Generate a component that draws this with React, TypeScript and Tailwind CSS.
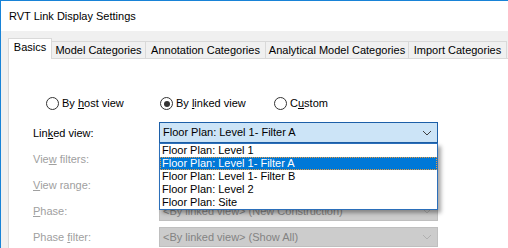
import React from 'react';

const Chevron: React.FC<{ disabled?: boolean }> = ({ disabled }) => (
  <svg width="10" height="6" viewBox="0 0 10 6" className="shrink-0">
    <path d="M1 1 L5 5 L9 1" fill="none" stroke={disabled ? '#b0b0b0' : '#404040'} strokeWidth="1" />
  </svg>
);

const Radio: React.FC<{ checked?: boolean; children: React.ReactNode }> = ({ checked, children }) => (
  <div className="w-[114px] flex items-center">
    <span className="w-[13px] h-[13px] rounded-full border border-[#333333] bg-white flex items-center justify-center shrink-0">
      {checked && <span className="w-[6px] h-[6px] rounded-full bg-[#333333]" />}
    </span>
    <span className="ml-[3px] leading-[13px]">{children}</span>
  </div>
);

const tabs = [
  { label: 'Model Categories', w: 'w-[94px]' },
  { label: 'Annotation Categories', w: 'w-[120px]' },
  { label: 'Analytical Model Categories', w: 'w-[143px]' },
  { label: 'Import Categories', w: 'w-[98px]' },
];

const items = [
  'Floor Plan: Level 1',
  'Floor Plan: Level 1- Filter A',
  'Floor Plan: Level 1- Filter B',
  'Floor Plan: Level 2',
  'Floor Plan: Site',
];

export default function App() {
  return (
    <div className="w-[508px] h-[248px] overflow-hidden bg-[#f0f0f0] border-t border-l border-[#1883d7] font-['Liberation_Sans',Arial,sans-serif] text-[11px] text-black flex flex-col">
      {/* title bar */}
      <div className="h-[30px] shrink-0 bg-white flex items-center pl-[8px]">RVT Link Display Settings</div>

      <div className="pl-[7px] flex-1 flex flex-col">
        {/* tabs */}
        <div className="h-[28px] shrink-0 flex items-end -mb-px relative z-10">
          <div className="w-[44px] h-[21px] bg-white border border-b-0 border-[#d9d9d9] flex items-center justify-center pb-[3px]">
            Basics
          </div>
          {tabs.map(t => (
            <div
              key={t.label}
              className={`${t.w} h-[18px] shrink-0 bg-[#f0f0f0] border border-l-0 border-[#d9d9d9] flex items-center justify-center whitespace-nowrap`}
            >
              {t.label}
            </div>
          ))}
        </div>

        {/* panel */}
        <div className="flex-1 bg-white border-l border-t border-[#d9d9d9] pl-[24px]">
          <div className="mt-[38px] ml-[13px] flex">
            <Radio>By <u>h</u>ost view</Radio>
            <Radio checked>By <u>l</u>inked view</Radio>
            <Radio>C<u>u</u>stom</Radio>
          </div>

          <div className="mt-[10px] flex flex-col">
            <div className="h-[26px] flex items-start">
              <div className="w-[126px] h-[26px] flex items-center"><span>Lin<u>k</u>ed view:</span></div>
              <div className="relative mt-[2px]">
                <div className="w-[279px] h-[21px] bg-[#cce4f7] border border-[#1c5fa8] flex items-center justify-between pl-[3px] pr-[5px]">
                  <span>Floor Plan: Level 1- Filter A</span>
                  <Chevron />
                </div>
                {/* open drop-down list */}
                <div className="absolute top-[21px] left-0 w-[279px] h-[67px] bg-white border border-[#2b6fba] z-20 shadow-[3px_3px_4px_rgba(0,0,0,0.35)]">
                  {items.map((it, i) => (
                    <div
                      key={it}
                      className={`h-[13px] leading-[13px] pl-[2px] whitespace-nowrap ${i === 1 ? 'bg-[#0078d7] text-white outline-1 outline-dotted -outline-offset-1 outline-[#e89a3c]' : ''}`}
                    >
                      {it}
                    </div>
                  ))}
                </div>
              </div>
            </div>

            {[
              { label: <>Vie<u>w</u> filters:</>, value: '' },
              { label: <><u>V</u>iew range:</>, value: '' },
              { label: <><u>P</u>hase:</>, value: '<By linked view> (New Construction)' },
              { label: <>Phase <u>f</u>ilter:</>, value: '<By linked view> (Show All)' },
            ].map((r, i) => (
              <div key={i} className="h-[26px] flex items-start">
                <div className="w-[126px] h-[26px] flex items-center pt-[1px] text-[#a0a0a0]"><span>{r.label}</span></div>
                <div className="mt-[3px] w-[279px] h-[20px] bg-[#cccccc] border border-[#bfbfbf] flex items-center justify-between pl-[3px] pr-[5px] text-[#838383]">
                  <span>{r.value}</span>
                  <Chevron disabled />
                </div>
              </div>
            ))}
          </div>
        </div>
      </div>
    </div>
  );
}
